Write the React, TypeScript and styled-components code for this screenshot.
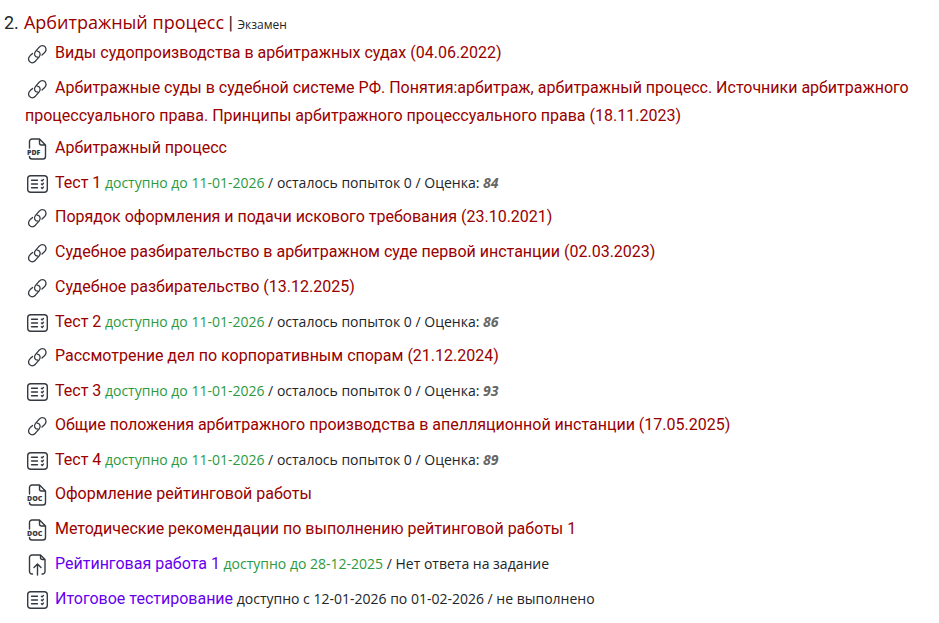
import React from "react";
import styled, { createGlobalStyle } from "styled-components";

const GlobalStyle = createGlobalStyle`
  * { box-sizing: border-box; }
  body {
    margin: 0;
    background: #ffffff;
    color: #212529;
    font-family: Roboto, "Segoe UI", sans-serif;
  }
`;

const Course = styled.main`
  padding: 8px 0 8px 4px;
`;

const CourseTitle = styled.h1`
  display: flex;
  align-items: baseline;
  gap: 5px;
  margin: 0;
  font-size: 18px;
  font-weight: 400;
  line-height: 28px;
`;

const CourseLink = styled.a`
  color: #990000;
  font-family: "Open Sans", "Segoe UI", sans-serif;
  text-decoration: none;
`;

const ControlForm = styled.small`
  font-family: "Open Sans", "Segoe UI", sans-serif;
  font-size: 12px;
`;

const MaterialList = styled.ul`
  margin: 0;
  padding: 0 0 0 21px;
  list-style: none;
`;

const Material = styled.li<{ $compact: boolean }>`
  min-height: ${(p) => (p.$compact ? 34 : 35)}px;
  padding-bottom: 4px;
  font-size: 16px;
  line-height: 28px;
`;

const MaterialLink = styled.a<{ $open: boolean }>`
  color: ${(p) => (p.$open ? "#6600ee" : "#990000")};
  text-decoration: none;
`;

const Icon = styled.svg`
  width: 24px;
  height: 24px;
  margin-right: 6px;
  vertical-align: -8px;
  fill: none;
  stroke: #343a40;
  stroke-linecap: round;
  stroke-linejoin: round;
`;

const IconLabel = styled.text`
  fill: #343a40;
  stroke: none;
  font-family: "Open Sans", sans-serif;
  font-size: 7px;
  font-weight: 800;
`;

const Details = styled.small`
  font-family: "Open Sans", "Segoe UI", sans-serif;
  font-size: 14px;
  line-height: 20px;
`;

const Available = styled.span`
  color: #2b9a3e;
`;

const Grade = styled.em`
  color: #666666;
  font-weight: 700;
`;

type Kind = "link" | "pdf" | "doc" | "test" | "upload";

interface Item {
  kind: Kind;
  title: string;
  open?: boolean;
  until?: string;
  status?: string;
  grade?: number;
}

const spent = "осталось попыток 0";

const items: Item[] = [
  { kind: "link", title: "Виды судопроизводства в арбитражных судах (04.06.2022)" },
  {
    kind: "link",
    title:
      "Арбитражные суды в судебной системе РФ. Понятия:арбитраж, арбитражный процесс. Источники арбитражного процессуального права. Принципы арбитражного процессуального права (18.11.2023)",
  },
  { kind: "pdf", title: "Арбитражный процесс" },
  { kind: "test", title: "Тест 1", until: "11-01-2026", status: spent, grade: 84 },
  { kind: "link", title: "Порядок оформления и подачи искового требования (23.10.2021)" },
  { kind: "link", title: "Судебное разбирательство в арбитражном суде первой инстанции (02.03.2023)" },
  { kind: "link", title: "Судебное разбирательство (13.12.2025)" },
  { kind: "test", title: "Тест 2", until: "11-01-2026", status: spent, grade: 86 },
  { kind: "link", title: "Рассмотрение дел по корпоративным спорам (21.12.2024)" },
  { kind: "test", title: "Тест 3", until: "11-01-2026", status: spent, grade: 93 },
  { kind: "link", title: "Общие положения арбитражного производства в апелляционной инстанции (17.05.2025)" },
  { kind: "test", title: "Тест 4", until: "11-01-2026", status: spent, grade: 89 },
  { kind: "doc", title: "Оформление рейтинговой работы" },
  { kind: "doc", title: "Методические рекомендации по выполнению рейтинговой работы 1" },
  { kind: "upload", title: "Рейтинговая работа 1", open: true, until: "28-12-2025", status: "Нет ответа на задание" },
  { kind: "test", title: "Итоговое тестирование", open: true, status: "доступно с 12-01-2026 по 01-02-2026 / не выполнено" },
];

function KindIcon({ kind }: { kind: Kind }) {
  if (kind === "link") {
    return (
      <Icon viewBox="0 0 24 24" strokeWidth="1.3" aria-hidden="true">
        <path d="M13 15.2C9.5 15 8.6 11.8 10.4 9.6L14.2 5.2C16.2 3 19 3.2 20.4 5.2C21.4 7 21 9.2 19.4 10.8L17 13" />
        <path d="M12.3 9.2C15.1 9.4 16 12.6 14.2 14.8L10.4 19.2C8.4 21.4 5.6 21.2 4.2 19.2C3.2 17.4 3.6 15.2 5.2 13.6L7.6 11.4" />
      </Icon>
    );
  }
  if (kind === "test") {
    return (
      <Icon viewBox="0 0 24 24" strokeWidth="1.4" aria-hidden="true">
        <rect x="2.7" y="3.7" width="19.6" height="16.6" rx="3" />
        <path d="M6.5 8.2h6M6.5 12h6M6.5 15.8h6M16.4 8.2l.8.7 1.2-1.4M16.4 12l.8.7 1.2-1.4M16.4 15.8l.8.7 1.2-1.4" />
      </Icon>
    );
  }
  if (kind === "upload") {
    return (
      <Icon viewBox="0 0 24 24" strokeWidth="1.4" aria-hidden="true">
        <path d="M7.5 21H7a2.5 2.5 0 0 1-2.5-2.5v-14A2.5 2.5 0 0 1 7 2h8.5L20 6.5v12a2.5 2.5 0 0 1-2.5 2.5H17M15.5 2v2.5a2 2 0 0 0 2 2H20" />
        <path d="M12.5 22V11.5M9 14.5l3.5-3.5 3.5 3.5" />
      </Icon>
    );
  }
  return (
    <Icon viewBox="0 0 24 24" strokeWidth="1.4" aria-hidden="true">
      <path d="M4.5 11V4.5A2.5 2.5 0 0 1 7 2h7.5l6 6v11.5a2.5 2.5 0 0 1-2.5 2.5H7A2.5 2.5 0 0 1 4.5 19.5M14.5 2v4a2 2 0 0 0 2 2h4" />
      <IconLabel x="2" y="18">
        {kind === "pdf" ? "PDF" : "DOC"}
      </IconLabel>
    </Icon>
  );
}

function MaterialRow({ item }: { item: Item }) {
  return (
    <Material $compact={item.kind === "test"}>
      <KindIcon kind={item.kind} />
      <MaterialLink href="#" $open={Boolean(item.open)}>
        {item.title}
      </MaterialLink>
      {item.status && (
        <Details>
          {" "}
          {item.until && (
            <>
              <Available>доступно до {item.until}</Available> /{" "}
            </>
          )}
          {item.status}
          {item.grade !== undefined && (
            <>
              {" "}
              / Оценка: <Grade>{item.grade}</Grade>
            </>
          )}
        </Details>
      )}
    </Material>
  );
}

export default function App() {
  return (
    <>
      <GlobalStyle />
      <Course>
        <CourseTitle>
          <span>2.</span>
          <span>
            <CourseLink href="#">Арбитражный процесс</CourseLink> | <ControlForm>Экзамен</ControlForm>
          </span>
        </CourseTitle>
        <MaterialList>
          {items.map((item) => (
            <MaterialRow key={item.title} item={item} />
          ))}
        </MaterialList>
      </Course>
    </>
  );
}
